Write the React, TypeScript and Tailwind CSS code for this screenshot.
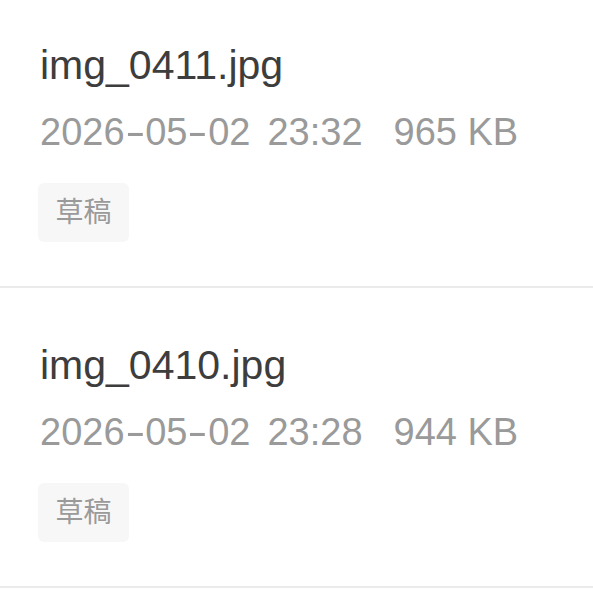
import React from "react";

type Photo = {
  name: string;
  date: string[];
  clock: string;
  size: string;
  status: string;
};

const photos: Photo[] = [
  { name: "img_0411.jpg", date: ["2026", "05", "02"], clock: "23:32", size: "965 KB", status: "草稿" },
  { name: "img_0410.jpg", date: ["2026", "05", "02"], clock: "23:28", size: "944 KB", status: "草稿" },
];

function DateText({ parts }: { parts: string[] }) {
  return (
    <span className="flex">
      {parts.map((p, i) => (
        <React.Fragment key={i}>
          {i > 0 && <span className="mx-[4px] inline-block scale-x-[1.6]">-</span>}
          <span>{p}</span>
        </React.Fragment>
      ))}
    </span>
  );
}

function PhotoRow({ photo }: { photo: Photo }) {
  return (
    <div className="border-b-2 border-[#ebebeb] px-[40px] pt-[49px] pb-[44px]">
      <div className="text-[41px] leading-[56px] text-[#3d3d3d]">{photo.name}</div>
      <div className="mt-[15px] flex text-[38px] leading-[48px] text-[#9a9a9a]">
        <DateText parts={photo.date} />
        <span className="ml-[17px]">{photo.clock}</span>
        <span className="ml-[31px]">{photo.size}</span>
      </div>
      <div className="mt-[27px] flex">
        <span className="-ml-[2px] flex h-[59px] w-[91px] items-center justify-center rounded-[6px] bg-[#f7f7f7] text-[28px] text-[#9a9a9a]">
          {photo.status}
        </span>
      </div>
    </div>
  );
}

export default function App() {
  return (
    <div
      className="min-h-[593px] overflow-hidden bg-white"
      style={{ fontFamily: '"Liberation Sans", "Noto Sans CJK SC", sans-serif' }}
    >
      <div className="-mt-[12px]">
        {photos.map((p) => (
          <PhotoRow key={p.name} photo={p} />
        ))}
      </div>
    </div>
  );
}
